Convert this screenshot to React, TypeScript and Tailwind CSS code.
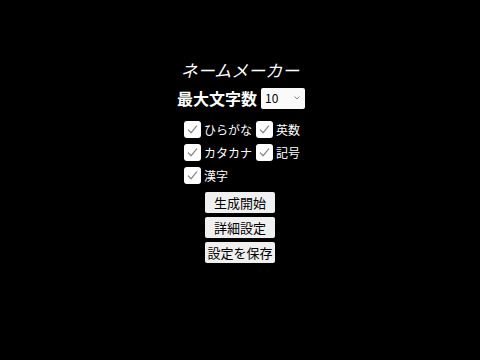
import { useState } from "react";

const options = [
  { key: "hiragana", label: "ひらがな" },
  { key: "alnum", label: "英数" },
  { key: "katakana", label: "カタカナ" },
  { key: "symbol", label: "記号" },
  { key: "kanji", label: "漢字" },
];

function Check({ label, checked, onToggle }: { label: string; checked: boolean; onToggle: () => void }) {
  return (
    <label className="flex h-[23px] cursor-pointer items-center gap-[3px]" onClick={onToggle}>
      <span className="flex h-[17px] w-[17px] items-center justify-center rounded-[3px] bg-white">
        {checked && (
          <svg width="13" height="13" viewBox="0 0 14 14" fill="none">
            <path d="M2.5 7.5 L5.5 10.5 L11.5 3" stroke="#8a8a8a" strokeWidth="1.3" strokeLinecap="round" strokeLinejoin="round" />
          </svg>
        )}
      </span>
      <span className="text-[12px] leading-none text-white">{label}</span>
    </label>
  );
}

export default function App() {
  const [checked, setChecked] = useState<Record<string, boolean>>({
    hiragana: true,
    alnum: true,
    katakana: true,
    symbol: true,
    kanji: true,
  });

  return (
    <div
      className="flex h-[360px] w-full flex-col items-center bg-black pt-[56px] text-white"
      style={{ fontFamily: '"Noto Sans CJK JP", "Noto Sans", sans-serif' }}
    >
      <h1 className="text-[17px] leading-[28px] italic">ネームメーカー</h1>

      <div className="mt-[3px] flex h-[22px] items-center gap-[4px] pl-[2px]">
        <span className="text-[16px] leading-none font-bold">最大文字数</span>
        <div className="flex h-[21px] w-[44px] items-center justify-between rounded-[2px] bg-[#fafafa] pr-[5px] pl-[4px]">
          <span className="text-[12px] leading-none text-black">10</span>
          <svg width="6" height="4" viewBox="0 0 6 4" fill="none">
            <path d="M0.5 0.5 L3 3 L5.5 0.5" stroke="#888" strokeWidth="1" />
          </svg>
        </div>
      </div>

      <div className="mt-[9px] grid grid-cols-[auto_auto] gap-x-[4px] pl-[4px]">
        {options.map((o) => (
          <Check
            key={o.key}
            label={o.label}
            checked={checked[o.key]}
            onToggle={() => setChecked((c) => ({ ...c, [o.key]: !c[o.key] }))}
          />
        ))}
      </div>

      <div className="mt-[5px] flex flex-col gap-[4px]">
        {["生成開始", "詳細設定", "設定を保存"].map((t) => (
          <button
            key={t}
            className="h-[21px] w-[70px] rounded-[2px] bg-[#f0f0f0] text-[13px] leading-none text-black"
          >
            {t}
          </button>
        ))}
      </div>
    </div>
  );
}
